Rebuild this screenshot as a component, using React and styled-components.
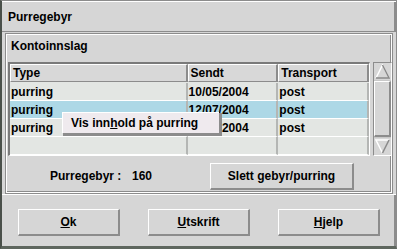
import React from 'react';
import styled, { createGlobalStyle } from 'styled-components';

const GlobalStyle = createGlobalStyle`
  html, body {
    margin: 0;
    padding: 0;
    background: #d6d6d6;
  }
  * {
    box-sizing: border-box;
  }
`;

const rows = [
  { type: 'purring', sendt: '10/05/2004', transport: 'post' },
  { type: 'purring', sendt: '12/07/2004', transport: 'post', selected: true },
  { type: 'purring', sendt: '12/07/2004', transport: 'post' },
];

const App = () => {
  return (
    <>
      <GlobalStyle />
      <Frame>
        <TitleBar>Purregebyr</TitleBar>
        <Panel>
          <GroupLabel>Kontoinnslag</GroupLabel>
          <TableArea>
            <Table>
              <HeaderRow>
                <HeaderCell $w={178}>Type</HeaderCell>
                <HeaderCell $w={91}>Sendt</HeaderCell>
                <HeaderCell $w={91}>Transport</HeaderCell>
              </HeaderRow>
              {rows.map((r, i) => (
                <Row key={i}>
                  <Cell $w={178} $selected={r.selected}>{r.type}</Cell>
                  <Cell $w={91} $selected={r.selected}>{r.sendt}</Cell>
                  <Cell $w={91} $selected={r.selected}>{r.transport}</Cell>
                </Row>
              ))}
              <Row $fill>
                <Cell $w={178} />
                <Cell $w={91} />
                <Cell $w={91} />
              </Row>
              <ContextMenu>
                Vis inn<u>h</u>old på purring
              </ContextMenu>
            </Table>
            <Scrollbar>
              <ArrowButton>
                <svg width="15" height="15" viewBox="0 0 15 15">
                  <path d="M1 14 L7.5 1 L14 14" fill="none" stroke="#ffffff" strokeWidth="1.5" />
                  <path d="M1 14 L14 14 L7.5 1" fill="none" stroke="#8a8a8a" strokeWidth="1.5" />
                </svg>
              </ArrowButton>
              <Thumb />
              <ArrowButton>
                <svg width="15" height="15" viewBox="0 0 15 15">
                  <path d="M14 1 L1 1 L7.5 14" fill="none" stroke="#ffffff" strokeWidth="1.5" />
                  <path d="M7.5 14 L14 1" fill="none" stroke="#8a8a8a" strokeWidth="1.5" />
                </svg>
              </ArrowButton>
            </Scrollbar>
          </TableArea>
          <FooterRow>
            <FeeLabel>Purregebyr :</FeeLabel>
            <FeeValue>160</FeeValue>
            <Button $w={144}>Slett gebyr/purring</Button>
          </FooterRow>
        </Panel>
        <ButtonBar>
          <Button $w={102}>
            <u>O</u>k
          </Button>
          <Button $w={102}>
            <u>U</u>tskrift
          </Button>
          <Button $w={102}>
            <u>H</u>jelp
          </Button>
        </ButtonBar>
      </Frame>
    </>
  );
};

export default App;

const Frame = styled.div`
  position: relative;
  width: 397px;
  height: 249px;
  display: flex;
  flex-direction: column;
  background: #d6d6d6;
  border-top: 1px solid #8c8c8c;
  border-right: 1px solid #8c8c8c;
  border-left: 2px solid #4a504a;
  border-bottom: 3px solid #5e665e;
  font-family: 'Liberation Sans', Arial, sans-serif;
  font-size: 12px;
  font-weight: bold;
  color: #000;
`;

const TitleBar = styled.div`
  height: 31px;
  padding-left: 6px;
  display: flex;
  align-items: center;
  border-top: 1px solid #ffffff;
  border-bottom: 1px solid #8c8c8c;
  box-shadow: inset -2px 0 0 #8c8c8c;
`;

const Panel = styled.div`
  margin: 1px 3px 0 3px;
  height: 161px;
  display: flex;
  flex-direction: column;
  border: 1px solid #8c8c8c;
  box-shadow: inset 1px 1px 0 #ffffff, inset -1px -1px 0 #ffffff,
    inset -2px -2px 0 #8c8c8c;
`;

const GroupLabel = styled.div`
  height: 28px;
  padding-left: 5px;
  padding-bottom: 5px;
  display: flex;
  align-items: center;
`;

const TableArea = styled.div`
  display: flex;
  align-items: flex-start;
  padding-left: 2px;
  gap: 3px;
`;

const Table = styled.div`
  position: relative;
  width: 363px;
  height: 94px;
  display: flex;
  flex-direction: column;
  overflow: hidden;
  background: #e3e6e3;
  border-top: 2px solid #7a7a7a;
  border-left: 2px solid #7a7a7a;
  border-right: 1px solid #ffffff;
  border-bottom: 1px solid #ffffff;
`;

const HeaderRow = styled.div`
  display: flex;
  height: 18px;
  margin-bottom: 1px;
`;

const HeaderCell = styled.div`
  width: ${({ $w }) => $w}px;
  height: 18px;
  padding-left: 2px;
  display: flex;
  align-items: center;
  background: #d8d8d8;
  border-top: 1px solid #ffffff;
  border-left: 1px solid #ffffff;
  border-right: 2px solid #8c8c8c;
  border-bottom: 1px solid #8c8c8c;
`;

const Row = styled.div`
  display: flex;
  flex: ${({ $fill }) => ($fill ? '1' : 'none')};
  height: ${({ $fill }) => ($fill ? 'auto' : '18px')};
`;

const Cell = styled.div`
  width: ${({ $w }) => $w}px;
  padding-left: 1px;
  padding-top: 1px;
  display: flex;
  align-items: center;
  background: ${({ $selected }) => ($selected ? '#add8e6' : 'transparent')};
  border-right: 2px solid #b4b6b4;
  border-bottom: 1px solid #ffffff;
`;

const ContextMenu = styled.div`
  position: absolute;
  left: 52px;
  top: 48px;
  width: 157px;
  height: 21px;
  padding-left: 8px;
  display: flex;
  align-items: center;
  background: #efeaee;
  border-top: 1px solid #ffffff;
  border-left: 1px solid #ffffff;
  box-shadow: 2px 2px 0 1px #8c8c8c;
  font-weight: bold;

  u {
    text-decoration-thickness: 1px;
  }
`;

const Scrollbar = styled.div`
  width: 19px;
  height: 94px;
  display: flex;
  flex-direction: column;
  background: #c8c8c8;
  border: 1px solid #8c8c8c;
  border-right-color: #ffffff;
  border-bottom-color: #ffffff;
`;

const ArrowButton = styled.div`
  height: 17px;
  display: flex;
  align-items: center;
  justify-content: center;
  background: #d6d6d6;
`;

const Thumb = styled.div`
  flex: 1;
  margin: 1px 0;
  background: #d6d6d6;
  border-top: 1px solid #ffffff;
  border-left: 1px solid #ffffff;
  border-right: 2px solid #8c8c8c;
  border-bottom: 2px solid #8c8c8c;
`;

const FooterRow = styled.div`
  flex: 1;
  display: flex;
  align-items: center;
  padding-left: 44px;
  padding-top: 3px;
`;

const FeeLabel = styled.div`
  width: 82px;
`;

const FeeValue = styled.div`
  width: 78px;
`;

const Button = styled.div`
  width: ${({ $w }) => $w}px;
  height: 27px;
  display: flex;
  align-items: center;
  justify-content: center;
  background: #d6d6d6;
  border-top: 1px solid #ffffff;
  border-left: 1px solid #ffffff;
  border-right: 2px solid #8c8c8c;
  border-bottom: 2px solid #8c8c8c;

  u {
    text-decoration-thickness: 1px;
  }
`;

const ButtonBar = styled.div`
  flex: 1;
  display: flex;
  align-items: center;
  justify-content: center;
  gap: 28px;
  padding-top: 4px;
  border-top: 1px solid #ffffff;
  box-shadow: inset -2px 0 0 #8c8c8c;
`;
